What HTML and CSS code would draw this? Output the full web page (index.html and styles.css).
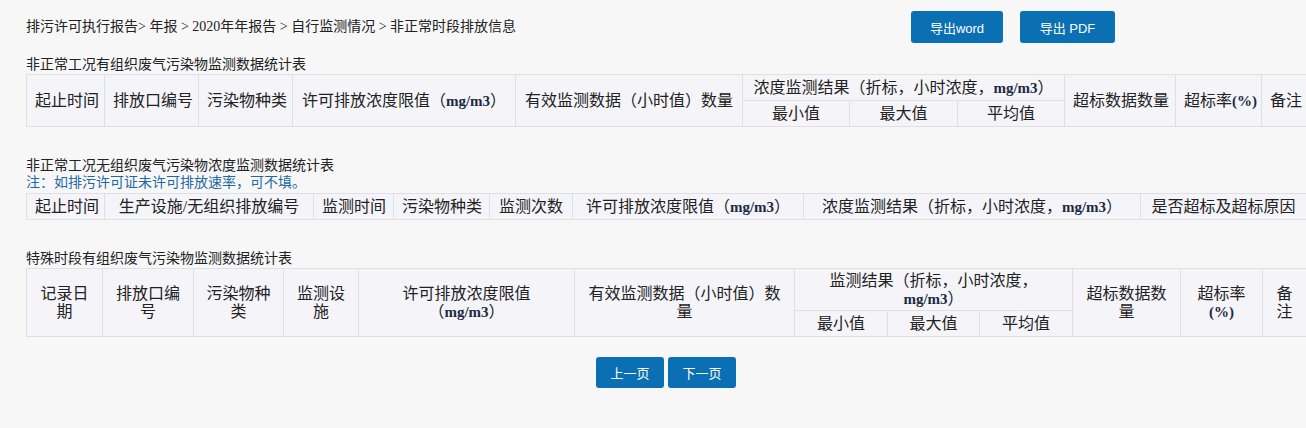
FILE: index.html
```html
<!DOCTYPE html>
<html lang="zh-CN">
<head>
<meta charset="utf-8">
<title>非正常时段排放信息</title>
<link rel="stylesheet" href="styles.css">
</head>
<body>
<div class="page">
  <div class="topbar">
    <div class="crumbs">排污许可执行报告&gt; 年报 &gt; 2020年年报告 &gt; 自行监测情况 &gt; 非正常时段排放信息</div>
    <div class="actions">
      <button class="btn btn-word">导出word</button>
      <button class="btn btn-pdf">导出 PDF</button>
    </div>
  </div>

  <div class="title t1">非正常工况有组织废气污染物监测数据统计表</div>
  <table class="grid nowrap">
    <colgroup>
      <col style="width:78px"><col style="width:94px"><col style="width:94px"><col style="width:223px"><col style="width:227px">
      <col style="width:107px"><col style="width:108px"><col style="width:107px"><col style="width:111px"><col style="width:86px"><col style="width:45px">
    </colgroup>
    <tr>
      <th rowspan="2">起止时间</th>
      <th rowspan="2">排放口编号</th>
      <th rowspan="2">污染物种类</th>
      <th rowspan="2">许可排放浓度限值（<span class="lat">mg/m3</span>）</th>
      <th rowspan="2">有效监测数据（小时值）数量</th>
      <th colspan="3">浓度监测结果（折标，小时浓度，<span class="lat">mg/m3</span>）</th>
      <th rowspan="2">超标数据数量</th>
      <th rowspan="2">超标率<span class="lat">(%)</span></th>
      <th rowspan="2">备注</th>
    </tr>
    <tr>
      <th>最小值</th><th>最大值</th><th>平均值</th>
    </tr>
  </table>

  <div class="title t2">非正常工况无组织废气污染物浓度监测数据统计表</div>
  <div class="note">注：如排污许可证未许可排放速率，可不填。</div>
  <table class="grid nowrap">
    <colgroup>
      <col style="width:78px"><col style="width:209px"><col style="width:80px"><col style="width:96px"><col style="width:83px"><col style="width:231px"><col style="width:337px"><col style="width:166px">
    </colgroup>
    <tr>
      <th>起止时间</th>
      <th>生产设施/无组织排放编号</th>
      <th>监测时间</th>
      <th>污染物种类</th>
      <th>监测次数</th>
      <th>许可排放浓度限值（<span class="lat">mg/m3</span>）</th>
      <th>浓度监测结果（折标，小时浓度，<span class="lat">mg/m3</span>）</th>
      <th>是否超标及超标原因</th>
    </tr>
  </table>

  <div class="title t3">特殊时段有组织废气污染物监测数据统计表</div>
  <table class="grid wrap">
    <colgroup>
      <col style="width:76px"><col style="width:91px"><col style="width:90px"><col style="width:75px"><col style="width:216px"><col style="width:220px">
      <col style="width:93px"><col style="width:92px"><col style="width:93px"><col style="width:108px"><col style="width:82px"><col style="width:44px">
    </colgroup>
    <tr class="r1">
      <th rowspan="2">记录日期</th>
      <th rowspan="2">排放口编号</th>
      <th rowspan="2">污染物种类</th>
      <th rowspan="2">监测设施</th>
      <th rowspan="2">许可排放浓度限值（<span class="lat">mg/m3</span>）</th>
      <th rowspan="2">有效监测数据（小时值）数量</th>
      <th colspan="3">监测结果（折标，小时浓度，<span class="lat">mg/m3</span>）</th>
      <th rowspan="2">超标数据数量</th>
      <th rowspan="2">超标率<span class="lat">(%)</span></th>
      <th rowspan="2">备注</th>
    </tr>
    <tr class="r2">
      <th>最小值</th><th>最大值</th><th>平均值</th>
    </tr>
  </table>

  <div class="pager">
    <button class="btn btn-page">上一页</button>
    <button class="btn btn-page">下一页</button>
  </div>
</div>
</body>
</html>
```
FILE: styles.css
```css
html, body {
  margin: 0;
  padding: 0;
  background: #f7f7f8;
}
body {
  font-family: "Liberation Serif", "Noto Sans CJK SC", serif;
  color: #222;
  overflow: hidden;
}
.page {
  padding-left: 26px;
  width: 1280px;
}
.topbar {
  display: flex;
  align-items: center;
  margin-top: 11px;
  height: 32px;
}
.crumbs {
  flex: 0 0 885px;
  font-size: 14px;
  line-height: 18px;
}
.actions {
  display: flex;
  gap: 17px;
}
.btn {
  border: none;
  border-radius: 3px;
  background: #0b70b3;
  color: #fff;
  font-family: "Liberation Sans", "Noto Sans CJK SC", sans-serif;
  font-size: 13px;
  padding: 0;
  cursor: pointer;
}
.btn-word { width: 92px; height: 32px; }
.btn-pdf { width: 95px; height: 32px; }
.title {
  font-size: 14px;
  line-height: 18px;
}
.t1 { margin-top: 13px; }
.t2 { margin-top: 30px; line-height: 17px; }
.note {
  font-size: 14px;
  line-height: 17px;
  color: #1f69a3;
  margin-bottom: 2px;
}
.t3 { margin-top: 30px; }
.grid {
  border-collapse: collapse;
  table-layout: fixed;
  width: 1280px;
  background: #f4f4f9;
}
.grid th {
  border: 1px solid #dfdfe6;
  font-weight: normal;
  font-size: 16px;
  line-height: 18px;
  padding: 4px 8px 3px;
  text-align: center;
  vertical-align: middle;
  color: #222;
}
.nowrap th { white-space: nowrap; overflow: hidden; }
.wrap th { padding: 2px 8px; }
.wrap .r1 { height: 42px; }
.wrap .r2 { height: 26px; }
.lat {
  font-family: "Liberation Serif", serif;
  font-weight: bold;
  font-size: 15px;
  line-height: 18px;
}
.grid .lat { color: #1c2a44; }
.pager {
  display: flex;
  justify-content: center;
  gap: 4px;
  margin-top: 20px;
}
.btn-page { width: 68px; height: 31px; }
```
